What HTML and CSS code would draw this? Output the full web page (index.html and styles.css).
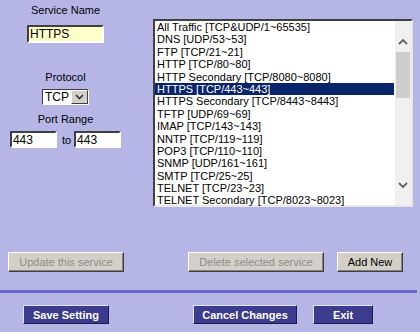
FILE: index.html
```html
<!DOCTYPE html>
<html lang="en">
<head>
    <meta charset="UTF-8">
    <title>Services</title>
    <link rel="stylesheet" href="styles.css">
</head>
<body>
    <div class="top">
        <div class="fields">
            <div class="field-label first">Service Name</div>
            <input type="text" class="name-input" value="HTTPS">

            <div class="field-label protocol">Protocol</div>
            <div class="proto">
                <span class="proto-value">TCP</span>
                <span class="proto-btn">
                    <svg width="9" height="6" viewBox="0 0 9 6"><polyline points="1,1 4.5,4.5 8,1" fill="none" stroke="#333" stroke-width="1.6"/></svg>
                </span>
            </div>

            <div class="field-label range">Port Range</div>
            <div class="port-row">
                <input type="text" class="port-input" value="443">
                <span class="to">to</span>
                <input type="text" class="port-input" value="443">
            </div>
        </div>

        <div class="service-list">
            <div class="items">
                <div class="item">All Traffic [TCP&amp;UDP/1~65535]</div>
                <div class="item">DNS [UDP/53~53]</div>
                <div class="item">FTP [TCP/21~21]</div>
                <div class="item">HTTP [TCP/80~80]</div>
                <div class="item">HTTP Secondary [TCP/8080~8080]</div>
                <div class="item selected">HTTPS [TCP/443~443]</div>
                <div class="item">HTTPS Secondary [TCP/8443~8443]</div>
                <div class="item">TFTP [UDP/69~69]</div>
                <div class="item">IMAP [TCP/143~143]</div>
                <div class="item">NNTP [TCP/119~119]</div>
                <div class="item">POP3 [TCP/110~110]</div>
                <div class="item">SNMP [UDP/161~161]</div>
                <div class="item">SMTP [TCP/25~25]</div>
                <div class="item">TELNET [TCP/23~23]</div>
                <div class="item">TELNET Secondary [TCP/8023~8023]</div>
            </div>
            <div class="scrollbar">
                <div class="sb-up">
                    <svg width="10" height="7" viewBox="0 0 10 7"><polyline points="1,6 5,2 9,6" fill="none" stroke="#606060" stroke-width="1.8"/></svg>
                </div>
                <div class="sb-thumb"></div>
                <div class="sb-track"></div>
                <div class="sb-down">
                    <svg width="10" height="7" viewBox="0 0 10 7"><polyline points="1,1 5,5 9,1" fill="none" stroke="#606060" stroke-width="1.8"/></svg>
                </div>
            </div>
        </div>
    </div>

    <div class="actions">
        <button class="grey-btn update" disabled>Update this service</button>
        <button class="grey-btn delete" disabled>Delete selected service</button>
        <button class="grey-btn add">Add New</button>
    </div>

    <div class="separator"></div>

    <div class="bottom">
        <button class="blue-btn save">Save Setting</button>
        <button class="blue-btn cancel">Cancel Changes</button>
        <button class="blue-btn exit">Exit</button>
    </div>
</body>
</html>
```

FILE: styles.css
```css
body {
    margin: 0;
    width: 420px;
    height: 332px;
    overflow: hidden;
    background: #b5b5e6;
    font-family: "Liberation Sans", Arial, sans-serif;
    font-size: 11px;
    color: #000;
}

.top {
    display: flex;
}

.fields {
    width: 131px;
    display: flex;
    flex-direction: column;
    align-items: center;
}

.field-label {
    line-height: 13px;
}

.field-label.first {
    margin-top: 4px;
}

.field-label.protocol {
    margin-top: 28px;
}

.field-label.range {
    margin-top: 8px;
}

.name-input,
.port-input {
    box-sizing: border-box;
    margin: 0;
    padding: 0 1px;
    border: 2px solid;
    border-color: #404040 #fff #fff #404040;
    font-family: "Liberation Sans", Arial, sans-serif;
    font-size: 12px;
    color: #000;
    outline: none;
}

.name-input {
    margin-top: 8px;
    width: 77px;
    height: 18px;
    background: #ffffc8;
}

.port-input {
    width: 47px;
    height: 17px;
    background: #fff;
}

.proto {
    margin-top: 5px;
    box-sizing: border-box;
    width: 47px;
    height: 16px;
    display: flex;
    background: #fff;
    border: 1px solid;
    border-color: #404040 #fff #fff #404040;
}

.proto-value {
    flex: 1;
    padding-left: 2px;
    font-size: 12px;
    line-height: 14px;
}

.proto-btn {
    box-sizing: border-box;
    width: 17px;
    height: 14px;
    display: flex;
    align-items: center;
    justify-content: center;
    background: #d4d0c8;
    border: 1px solid;
    border-color: #fff #404040 #404040 #fff;
}

.port-row {
    margin-top: 5px;
    display: flex;
    align-items: center;
}

.to {
    margin: 0 3px 0 5px;
}

.service-list {
    margin-left: 22px;
    margin-top: 19px;
    box-sizing: border-box;
    width: 260px;
    height: 188px;
    display: flex;
    background: #fff;
    border: 2px solid;
    border-color: #404040 #e8e8e8 #e8e8e8 #404040;
}

.items {
    flex: 1;
    padding: 0 1px 0 0;
}

.item {
    height: 12.4px;
    line-height: 12.4px;
    padding-left: 2px;
    white-space: nowrap;
}

.item.selected {
    background: #0a246a;
    color: #fff;
}

.scrollbar {
    width: 16px;
    display: flex;
    flex-direction: column;
    background: #f0f0f0;
}

.sb-up {
    height: 31px;
    display: flex;
    justify-content: center;
    align-items: flex-start;
}

.sb-up svg {
    margin-top: 17px;
}

.sb-thumb {
    height: 46px;
    margin: 0 1px;
    background: #cdcdcd;
}

.sb-track {
    flex: 1;
}

.sb-down {
    height: 35px;
    display: flex;
    justify-content: center;
    align-items: flex-start;
}

.sb-down svg {
    margin-top: 12px;
}

.actions {
    margin-top: 45px;
    padding-left: 8px;
    display: flex;
}

.grey-btn {
    box-sizing: border-box;
    height: 20px;
    margin: 0;
    padding: 0;
    background: #d4d0c8;
    border: 1px solid;
    border-color: #fff #404040 #404040 #fff;
    box-shadow: inset -1px -1px #808080;
    font-family: "Liberation Sans", Arial, sans-serif;
    font-size: 11px;
    color: #000;
}

.grey-btn:disabled {
    color: #8c8c8c;
}

.update {
    width: 116px;
}

.delete {
    width: 136px;
    margin-left: 64px;
}

.add {
    width: 66px;
    margin-left: 13px;
}

.separator {
    margin-top: 18px;
    width: 417px;
    height: 3px;
    background: #6666cc;
}

.bottom {
    margin-top: 12px;
    padding-left: 23px;
    display: flex;
}

.blue-btn {
    box-sizing: border-box;
    height: 19px;
    margin: 0;
    padding: 0;
    background: #3c3c8e;
    border: 1px solid;
    border-color: #e4e4f8 #1c1c4c #1c1c4c #e4e4f8;
    font-family: "Liberation Sans", Arial, sans-serif;
    font-size: 11px;
    font-weight: bold;
    color: #fff;
}

.save {
    width: 86px;
}

.cancel {
    width: 104px;
    margin-left: 84px;
}

.exit {
    width: 60px;
    margin-left: 16px;
}
```
